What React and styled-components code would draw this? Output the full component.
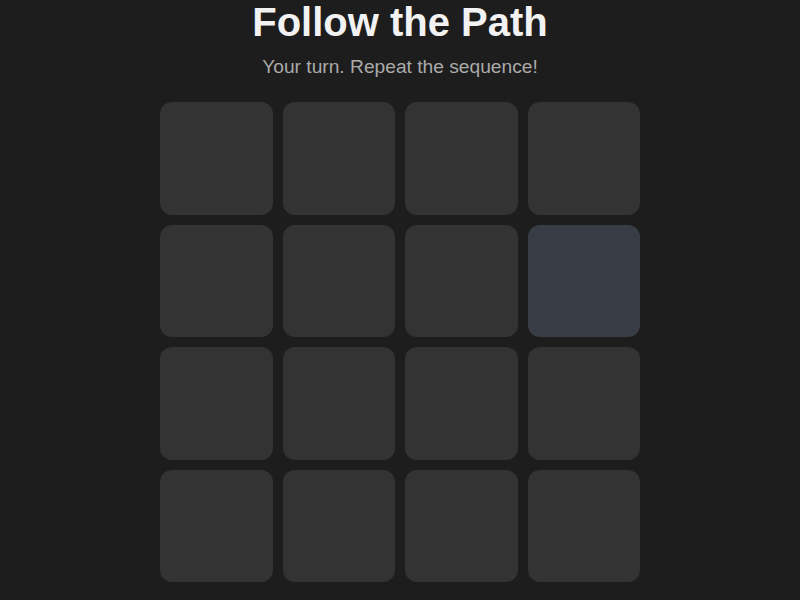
import React from 'react';
import styled, { createGlobalStyle } from 'styled-components';

const GlobalStyle = createGlobalStyle`
  html, body {
    margin: 0;
    padding: 0;
    background: #1d1d1d;
    font-family: "Liberation Sans", Arial, Helvetica, sans-serif;
  }
`;

const Page = styled.div`
  width: 800px;
  height: 600px;
  display: flex;
  flex-direction: column;
  align-items: center;
  overflow: hidden;
`;

const Title = styled.h1`
  margin: 0;
  font-size: 40px;
  font-weight: bold;
  color: #f2f2f2;
`;

const Subtitle = styled.p`
  margin: 11px 0 24px;
  font-size: 19.2px;
  color: #aaaaaa;
`;

const Board = styled.div`
  width: 480px;
  display: grid;
  grid-template-columns: repeat(4, 1fr);
  grid-auto-rows: 112.5px;
  gap: 10px;
`;

const Tile = styled.div`
  border-radius: 12px;
  background: ${(p) => (p.$lit ? '#383c44' : '#333333')};
`;

const LIT = 7;

export default function App() {
  return (
    <Page>
      <GlobalStyle />
      <Title>Follow the Path</Title>
      <Subtitle>Your turn. Repeat the sequence!</Subtitle>
      <Board>
        {Array.from({ length: 16 }, (_, i) => (
          <Tile key={i} $lit={i === LIT} />
        ))}
      </Board>
    </Page>
  );
}
